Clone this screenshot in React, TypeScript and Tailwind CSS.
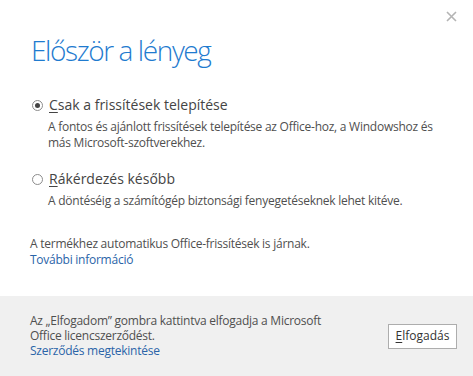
import React from "react";

function Radio({ checked }: { checked?: boolean }) {
  return (
    <div className="w-[11px] h-[11px] rounded-full border border-[#8c8c8c] bg-white flex items-center justify-center shrink-0">
      {checked && <div className="w-[5px] h-[5px] rounded-full bg-[#444]" />}
    </div>
  );
}

export default function App() {
  return (
    <div
      className="relative w-[473px] h-[376px] bg-white flex flex-col overflow-hidden"
      style={{ fontFamily: '"Open Sans", "Noto Sans", sans-serif' }}
    >
      <button className="absolute left-[446px] top-[11px] w-[11px] h-[11px]" aria-label="Bezárás">
        <svg viewBox="0 0 11 11" width="11" height="11">
          <path d="M1 1 L10 10 M10 1 L1 10" stroke="#b4b4b4" strokeWidth="1.6" />
        </svg>
      </button>

      <div className="flex-1 pl-[30px]">
        <h1 className="mt-[30px] ml-[1px] text-[28px] leading-[40px] font-light text-[#1f7bcf] tracking-[-1.4px]">
          Először a lényeg
        </h1>

        <div className="mt-[25px] flex flex-col">
          <div className="flex items-center gap-[6px] ml-[2px]">
            <Radio checked />
            <span className="text-[14px] leading-[20px] text-[#444]">
              <span className="underline underline-offset-2">C</span>sak a frissítések telepítése
            </span>
          </div>
          <p className="mt-[4px] ml-[18px] text-[12px] leading-[16px] text-[#4f4f4f] tracking-[-0.25px]">
            A fontos és ajánlott frissítések telepítése az Office-hoz, a Windowshoz és
            <br />
            más Microsoft-szoftverekhez.
          </p>

          <div className="mt-[18px] flex items-center gap-[6px] ml-[2px]">
            <Radio />
            <span className="text-[14px] leading-[20px] text-[#444]">
              <span className="underline underline-offset-2">R</span>ákérdezés később
            </span>
          </div>
          <p className="mt-[4px] ml-[18px] text-[12px] leading-[16px] text-[#4f4f4f] tracking-[-0.25px]">
            A döntéséig a számítógép biztonsági fenyegetéseknek lehet kitéve.
          </p>
        </div>

        <div className="mt-[27px] text-[12px] leading-[16px] tracking-[-0.25px]">
          <p className="text-[#4f4f4f]">A termékhez automatikus Office-frissítések is járnak.</p>
          <a className="text-[#2a64a8] cursor-pointer">További információ</a>
        </div>
      </div>

      <div className="h-[80px] bg-[#f0f0f0] flex items-center justify-between pl-[30px] pr-[16px]">
        <div className="text-[12px] leading-[15px] tracking-[-0.25px] -mt-[2px]">
          <p className="text-[#4f4f4f]">Az „Elfogadom” gombra kattintva elfogadja a Microsoft</p>
          <p className="text-[#4f4f4f]">Office licencszerződést.</p>
          <a className="text-[#2a64a8] cursor-pointer">Szerződés megtekintése</a>
        </div>
        <button className="w-[69px] h-[25px] bg-white border border-[#adadad] text-[12px] text-[#333] flex items-center justify-center">
          <span>
            <span className="underline underline-offset-2">E</span>lfogadás
          </span>
        </button>
      </div>
    </div>
  );
}
